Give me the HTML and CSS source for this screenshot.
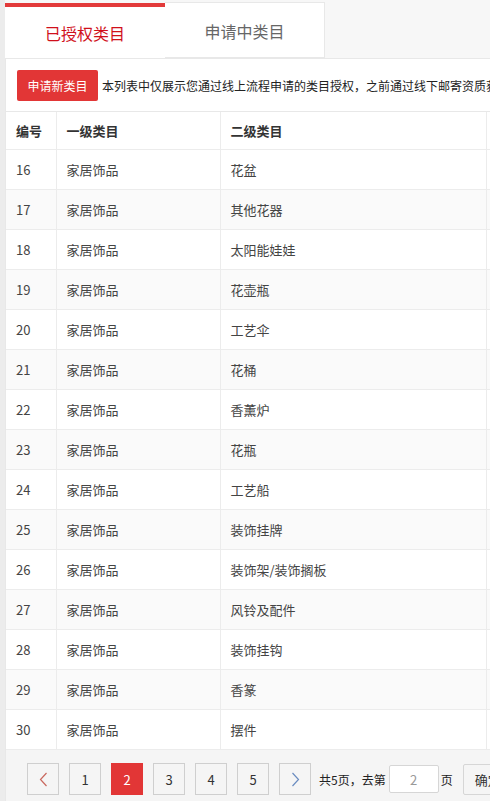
FILE: index.html
```html
<!DOCTYPE html>
<html lang="zh-CN">
<head>
<meta charset="utf-8">
<title>类目管理</title>
<link rel="stylesheet" href="styles.css">
</head>
<body>
<div class="page">
  <div class="tabs">
    <div class="tab tab-active">已授权类目</div>
    <div class="tab">申请中类目</div>
  </div>
  <div class="panel">
    <div class="toolbar">
      <button class="btn-apply">申请新类目</button>
      <span class="notice">本列表中仅展示您通过线上流程申请的类目授权，之前通过线下邮寄资质获得的类目授权请在商家后台查看</span>
    </div>
    <table class="grid">
      <colgroup>
        <col class="c1"><col class="c2"><col class="c3"><col class="c4">
      </colgroup>
      <thead>
        <tr><th>编号</th><th>一级类目</th><th>二级类目</th><th></th></tr>
      </thead>
      <tbody>
        <tr><td>16</td><td>家居饰品</td><td>花盆</td><td></td></tr>
        <tr><td>17</td><td>家居饰品</td><td>其他花器</td><td></td></tr>
        <tr><td>18</td><td>家居饰品</td><td>太阳能娃娃</td><td></td></tr>
        <tr><td>19</td><td>家居饰品</td><td>花壶瓶</td><td></td></tr>
        <tr><td>20</td><td>家居饰品</td><td>工艺伞</td><td></td></tr>
        <tr><td>21</td><td>家居饰品</td><td>花桶</td><td></td></tr>
        <tr><td>22</td><td>家居饰品</td><td>香薰炉</td><td></td></tr>
        <tr><td>23</td><td>家居饰品</td><td>花瓶</td><td></td></tr>
        <tr><td>24</td><td>家居饰品</td><td>工艺船</td><td></td></tr>
        <tr><td>25</td><td>家居饰品</td><td>装饰挂牌</td><td></td></tr>
        <tr><td>26</td><td>家居饰品</td><td>装饰架/装饰搁板</td><td></td></tr>
        <tr><td>27</td><td>家居饰品</td><td>风铃及配件</td><td></td></tr>
        <tr><td>28</td><td>家居饰品</td><td>装饰挂钩</td><td></td></tr>
        <tr><td>29</td><td>家居饰品</td><td>香篆</td><td></td></tr>
        <tr><td>30</td><td>家居饰品</td><td>摆件</td><td></td></tr>
      </tbody>
    </table>
    <div class="pager">
      <a class="pg pg-arrow"><svg width="9" height="15" viewBox="0 0 9 15"><path d="M7.5 1 L1.5 7.5 L7.5 14" fill="none" stroke="#c9685e" stroke-width="1.2"/></svg></a>
      <a class="pg">1</a>
      <a class="pg pg-cur">2</a>
      <a class="pg">3</a>
      <a class="pg">4</a>
      <a class="pg">5</a>
      <a class="pg pg-arrow pg-next"><svg width="9" height="15" viewBox="0 0 9 15"><path d="M1.5 1 L7.5 7.5 L1.5 14" fill="none" stroke="#6a8cc0" stroke-width="1.2"/></svg></a>
      <span class="pg-text">共5页，去第</span>
      <input class="pg-input" type="text" value="2">
      <span class="pg-text pg-unit">页</span>
      <button class="pg-ok">确定</button>
    </div>
  </div>
</div>
</body>
</html>
```

FILE: styles.css
```css
* { box-sizing: border-box; }
html, body {
  margin: 0;
  padding: 0;
  width: 490px;
  height: 801px;
  overflow: hidden;
}
body {
  background: linear-gradient(to right, #ececec 0, #ececec 5px, #f7f7f7 5px);
  font-family: "Noto Sans CJK SC", "Noto Sans", sans-serif;
  color: #333;
}
.page {
  padding-left: 5px;
  width: 700px;
}
.tabs {
  display: flex;
  align-items: flex-end;
  height: 58px;
  border-top: 2px solid transparent;
}
.tab {
  width: 160px;
  height: 56px;
  display: flex;
  align-items: center;
  justify-content: center;
  font-size: 16px;
  color: #666;
  background: #fff;
  border: 1px solid #e8e8e8;
  border-left: none;
  padding-top: 1px;
}
.tab-active {
  height: 55px;
  color: #d0101b;
  border: none;
  border-top: 4px solid #e23a3a;
  padding-top: 0;
}
.panel {
  background: #fff;
  border: 1px solid #e8e8e8;
}
.toolbar {
  display: flex;
  align-items: center;
  height: 53px;
  padding-left: 11px;
  border-bottom: 1px solid #e8e8e8;
  white-space: nowrap;
}
.btn-apply {
  height: 31px;
  width: 81px;
  padding: 0;
  border: none;
  border-radius: 2px;
  background: #e23636;
  color: #fff;
  font-family: inherit;
  font-size: 12px;
  margin-right: 4px;
}
.notice {
  font-size: 12px;
  color: #222;
}
.grid {
  border-collapse: collapse;
  table-layout: fixed;
  width: 650px;
  font-size: 13px;
}
.c1 { width: 50px; }
.c2 { width: 164px; }
.c3 { width: 266px; }
.c4 { width: 170px; }
.grid th, .grid td {
  text-align: left;
  padding: 0 0 0 10px;
  border-right: 1px solid #ececec;
  border-bottom: 1px solid #ececec;
  white-space: nowrap;
}
.grid th {
  height: 37px;
  font-weight: bold;
  color: #333;
}
.grid td {
  height: 40px;
  color: #444;
}
.grid tbody tr:nth-child(even) td { background: #fafafa; }
.pager {
  display: flex;
  align-items: center;
  background: #f5f5f5;
  height: 60px;
  padding: 0 0 0 21px;
  margin-top: -1px;
  border-top: 1px solid #ececec;
  white-space: nowrap;
}
.pg {
  width: 32px;
  height: 32px;
  margin-right: 10px;
  display: flex;
  align-items: center;
  justify-content: center;
  border: 1px solid #cfcfcf;
  background: #f5f5f5;
  font-size: 13px;
  color: #333;
  flex: none;
}
.pg-next { margin-right: 8px; }
.pg-cur {
  background: #e23636;
  border-color: #e23636;
  color: #fff;
}
.pg-text {
  font-size: 12px;
  color: #222;
}
.pg-input {
  width: 50px;
  height: 28px;
  margin: 0 2px 0 3px;
  border: 1px solid #d6d6d6;
  border-radius: 2px;
  background: #fff;
  text-align: center;
  font-family: inherit;
  font-size: 13px;
  color: #999;
  padding: 0;
}
.pg-unit { margin-right: 10px; }
.pg-ok {
  height: 31px;
  width: 50px;
  padding: 0;
  border: 1px solid #d6d6d6;
  border-radius: 2px;
  background: #f5f5f5;
  font-family: inherit;
  font-size: 13px;
  color: #333;
}
```
